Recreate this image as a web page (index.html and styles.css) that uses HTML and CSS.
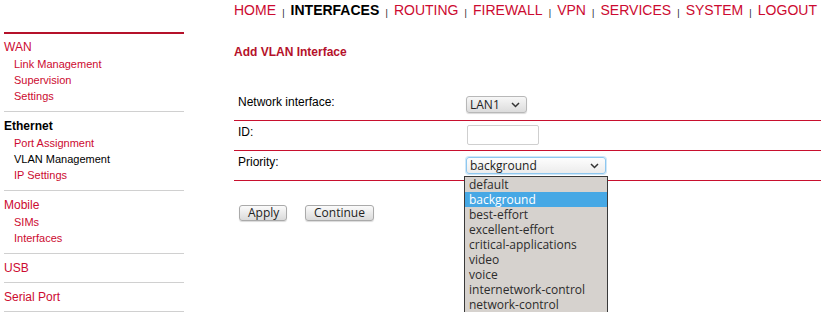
FILE: index.html
```html
<!DOCTYPE html>
<html lang="en">
<head>
    <meta charset="UTF-8">
    <title>Add VLAN Interface</title>
    <link rel="stylesheet" href="styles.css">
</head>
<body>
<div class="page">
    <div class="sidebar">
        <div class="section first">
            <a class="head" href="#">WAN</a>
            <ul>
                <li><a href="#">Link Management</a></li>
                <li><a href="#">Supervision</a></li>
                <li><a href="#">Settings</a></li>
            </ul>
        </div>
        <div class="section">
            <span class="head current">Ethernet</span>
            <ul>
                <li><a href="#">Port Assignment</a></li>
                <li><span class="current">VLAN Management</span></li>
                <li><a href="#">IP Settings</a></li>
            </ul>
        </div>
        <div class="section">
            <a class="head" href="#">Mobile</a>
            <ul>
                <li><a href="#">SIMs</a></li>
                <li><a href="#">Interfaces</a></li>
            </ul>
        </div>
        <div class="section">
            <a class="head" href="#">USB</a>
        </div>
        <div class="section">
            <a class="head" href="#">Serial Port</a>
        </div>
        <div class="section last"></div>
    </div>
    <div class="main">
        <div class="topnav">
            <a href="#">HOME</a><span class="sep">|</span><b>INTERFACES</b><span class="sep">|</span><a href="#">ROUTING</a><span class="sep">|</span><a href="#">FIREWALL</a><span class="sep">|</span><a href="#">VPN</a><span class="sep">|</span><a href="#">SERVICES</a><span class="sep">|</span><a href="#">SYSTEM</a><span class="sep">|</span><a href="#">LOGOUT</a>
        </div>
        <h1>Add VLAN Interface</h1>
        <div class="form">
            <div class="row first">
                <div class="label">Network interface:</div>
                <div class="field"><div class="select small">LAN1<svg width="9" height="6" viewBox="0 0 9 6"><path d="M1 1l3.5 3.5L8 1" fill="none" stroke="#333" stroke-width="1.5"/></svg></div></div>
            </div>
            <div class="row">
                <div class="label">ID:</div>
                <div class="field"><div class="input"></div></div>
            </div>
            <div class="row">
                <div class="label">Priority:</div>
                <div class="field holder">
                    <div class="select wide focus">background<svg width="9" height="6" viewBox="0 0 9 6"><path d="M1 1l3.5 3.5L8 1" fill="none" stroke="#333" stroke-width="1.5"/></svg></div>
                    <ul class="dropdown">
                        <li>default</li>
                        <li class="sel">background</li>
                        <li>best-effort</li>
                        <li>excellent-effort</li>
                        <li>critical-applications</li>
                        <li>video</li>
                        <li>voice</li>
                        <li>internetwork-control</li>
                        <li>network-control</li>
                    </ul>
                </div>
            </div>
        </div>
        <div class="buttons">
            <span class="btn apply">Apply</span>
            <span class="btn">Continue</span>
        </div>
    </div>
</div>
</body>
</html>
```
FILE: styles.css
```css
*{
    padding: 0;
    margin: 0;
}
body{
    font-family: "Liberation Sans", Arial, sans-serif;
    font-size: 12px;
    color: #000;
    background: #fff;
}
a{
    color: #cc0a30;
    text-decoration: none;
}
.page{
    display: flex;
}
.sidebar{
    width: 180px;
    margin: 32px 0 0 4px;
}
.section{
    border-top: 1px solid #d0d0d0;
    padding: 5px 0 5px;
}
.section.first{
    border-top: 2px solid #b5112a;
    padding-top: 4px;
}
.section.last{
    padding: 0;
}
.section .head{
    display: block;
    font-size: 12px;
    line-height: 18px;
}
.section ul{
    list-style: none;
    padding: 0 0 2px 10px;
}
.section li{
    font-size: 11px;
    line-height: 16px;
}
.current{
    color: #000;
}
.head.current{
    font-weight: bold;
}
.main{
    flex: 1;
    margin-left: 50px;
}
.topnav{
    font-size: 14px;
    line-height: 20px;
    white-space: nowrap;
}
.topnav b{
    color: #000;
}
.sep{
    display: inline-block;
    width: 14.6px;
    text-align: center;
    font-size: 9px;
    vertical-align: -1px;
    color: #222;
}
h1{
    font-size: 12px;
    color: #b5112a;
    margin-top: 22px;
    line-height: 14px;
}
.form{
    margin-top: 28px;
}
.row{
    display: flex;
    height: 25px;
    padding-top: 4px;
    border-bottom: 1px solid #c8102e;
}
.row.first{
    padding-top: 8px;
}
.label{
    width: 228px;
    padding-left: 4px;
    line-height: 14px;
}
.field{
    flex: 1;
}
.select, .btn{
    font-family: "Open Sans", "DejaVu Sans", sans-serif;
    font-size: 12px;
    color: #222;
}
.select{
    display: flex;
    align-items: center;
    justify-content: space-between;
    box-sizing: border-box;
    height: 17px;
    padding: 0 6px 0 3px;
    border: 1px solid #b8b8b8;
    border-radius: 3px;
    background: linear-gradient(#f7f7f7, #dcdcdc);
    line-height: 15px;
}
.select.small{
    width: 61px;
    margin-top: 1px;
    box-shadow: 0 1px 1px rgba(0,0,0,.15);
}
.select.wide{
    width: 140px;
    margin-top: 2px;
}
.select.focus{
    border-color: #8ec7ef;
    background: linear-gradient(#fdfdfd, #ececec);
    box-shadow: 0 0 0 1px #cfe7f8;
}
.input{
    width: 72px;
    height: 20px;
    box-sizing: border-box;
    margin-left: 1px;
    border: 1px solid #cfcfcf;
    border-radius: 2px;
    background: #fff;
}
.holder{
    position: relative;
}
.dropdown{
    position: absolute;
    left: -2px;
    top: 21px;
    width: 144px;
    box-sizing: border-box;
    list-style: none;
    border: 1px solid #3a3a3a;
    background: #d6d2ce;
    font-family: "Open Sans", "DejaVu Sans", sans-serif;
    font-size: 12px;
    color: #2c2c2c;
    padding: 0;
    z-index: 2;
}
.dropdown li{
    line-height: 15px;
    padding-left: 4px;
    white-space: nowrap;
}
.dropdown li.sel{
    background: #46a8e5;
    color: #fff;
}
.buttons{
    display: flex;
    gap: 18px;
    margin: 24px 0 0 5px;
}
.btn{
    display: inline-block;
    box-sizing: border-box;
    height: 16px;
    line-height: 14px;
    padding: 0 8px;
    border: 1px solid #aaa;
    border-radius: 3px;
    background: linear-gradient(#fbfbfb, #dadada);
    box-shadow: 0 1px 1px rgba(0,0,0,.15);
    text-align: center;
}
.btn.apply{
    width: 48px;
}
```
